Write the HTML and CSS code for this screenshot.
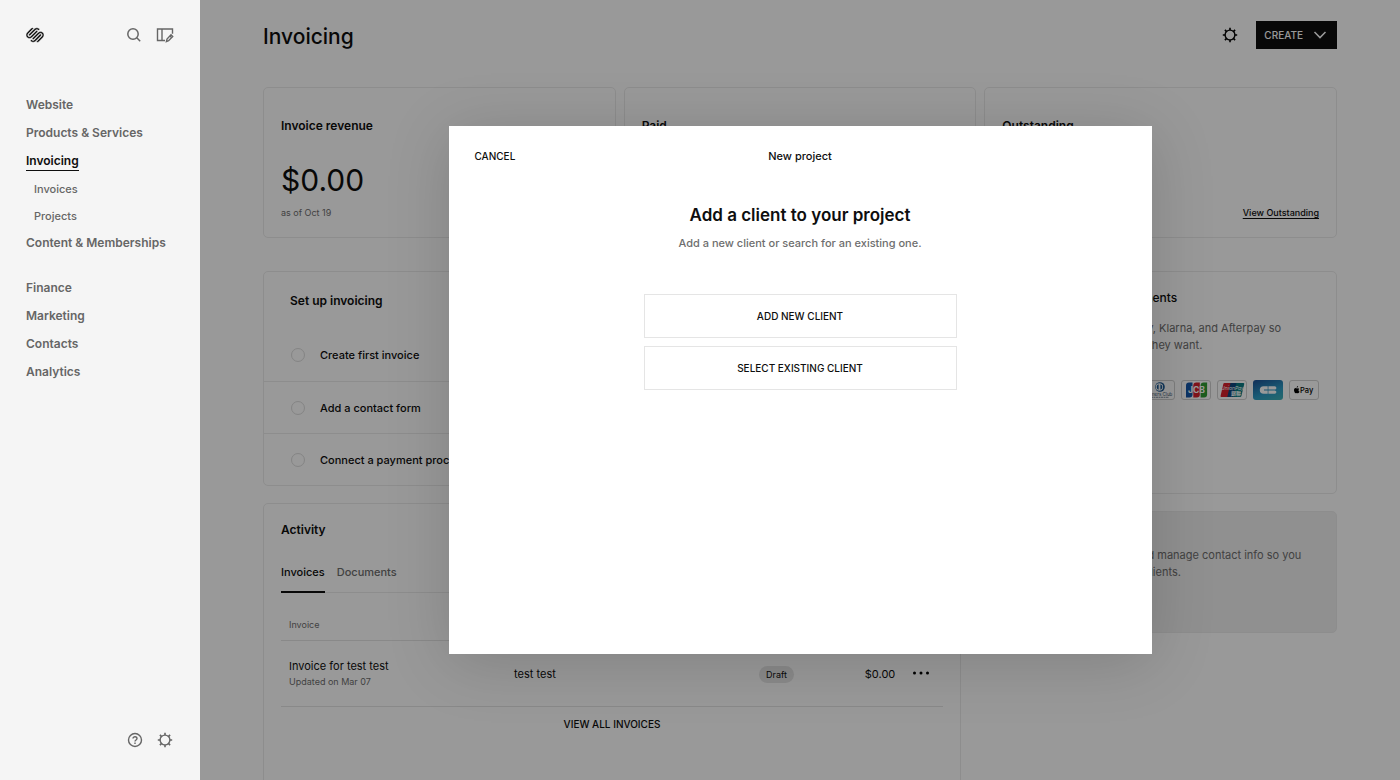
FILE: index.html
```html
<!DOCTYPE html>
<html lang="en">
<head>
    <meta charset="utf-8">
    <meta name="viewport" content="width=device-width,initial-scale=1.0">
    <title>Invoicing</title>
    <link rel="stylesheet" href="styles.css">
</head>

<body>
    <svg class="defs" width="0" height="0" aria-hidden="true">
        <symbol id="gear" viewBox="0 0 16 16">
            <circle cx="8" cy="8" r="4.9" fill="none" stroke="currentColor" stroke-width="1.4" />
            <path d="M8 .8v2.3M8 12.9v2.3M.8 8h2.3M12.9 8h2.3M2.9 2.9l1.7 1.7M11.4 11.4l1.7 1.7M2.9 13.1l1.7-1.7M11.4 4.6l1.7-1.7" fill="none" stroke="currentColor" stroke-width="1.6" />
        </symbol>
    </svg>

    <aside class="sidebar">
        <div class="sidebar-top">
            <a href="#" class="logo" aria-label="Home">
                <svg width="18" height="18" viewBox="0 0 24 24" fill="currentColor" stroke="#f5f5f5" stroke-width=".5">
                    <path d="M22.655 8.719c-1.802-1.801-4.726-1.801-6.564 0l-7.351 7.35c-.45.45-.45 1.2 0 1.65.45.449 1.2.449 1.65 0l7.351-7.351c.899-.899 2.362-.899 3.264 0 .9.9.9 2.364 0 3.264l-7.239 7.239c.9.899 2.362.899 3.263 0l5.589-5.589c1.836-1.838 1.836-4.763.037-6.563zm-2.475 2.437c-.451-.45-1.201-.45-1.65 0l-7.354 7.389c-.9.9-2.361.9-3.262 0-.45-.45-1.201-.45-1.651 0-.45.45-.45 1.2 0 1.65 1.801 1.801 4.726 1.801 6.564 0l7.351-7.351c.449-.487.449-1.238.002-1.688zm-2.439-7.35c-1.801-1.801-4.726-1.801-6.564 0l-7.351 7.351c-.45.449-.45 1.199 0 1.649s1.2.45 1.65 0l7.395-7.351c.9-.899 2.371-.899 3.27 0 .451.45 1.201.45 1.65 0 .421-.487.421-1.199-.05-1.649zm-2.475 2.475c-.45-.449-1.2-.449-1.65 0l-7.351 7.351c-.899.9-2.363.9-3.265 0-.9-.9-.9-2.364 0-3.264l7.239-7.239c-.9-.9-2.362-.9-3.263 0L1.35 8.719c-1.8 1.8-1.8 4.725 0 6.563 1.801 1.801 4.725 1.801 6.564 0l7.35-7.351c.451-.488.451-1.2.002-1.65z" />
                </svg>
            </a>
            <div class="icon-row">
                <button type="button" class="icon-button" aria-label="Search">
                    <svg width="16" height="16" viewBox="0 0 16 16" fill="none" stroke="currentColor" stroke-width="1.5">
                        <circle cx="7" cy="7" r="5.2" />
                        <path d="M10.8 10.8l3.4 3.4" />
                    </svg>
                </button>
                <button type="button" class="icon-button" aria-label="Edit site">
                    <svg width="18" height="16" viewBox="0 0 18 16" fill="none" stroke="currentColor" stroke-width="1.4">
                        <path d="M9 13.5H1.5V2h15v4.8" />
                        <path d="M6 2v11.5" />
                        <path d="M10.4 14.6l.6-2.6 4-4.2 1.7 1.7-4.1 4.2z" />
                        <path d="M14 9l1.6 1.6" />
                    </svg>
                </button>
            </div>
        </div>
        <nav class="nav">
            <ul>
                <li><a href="#">Website</a></li>
                <li><a href="#">Products &amp; Services</a></li>
                <li><a href="#" class="active">Invoicing</a></li>
                <li class="sub"><a href="#">Invoices</a></li>
                <li class="sub"><a href="#">Projects</a></li>
                <li><a href="#">Content &amp; Memberships</a></li>
            </ul>
            <ul>
                <li><a href="#">Finance</a></li>
                <li><a href="#">Marketing</a></li>
                <li><a href="#">Contacts</a></li>
                <li><a href="#">Analytics</a></li>
            </ul>
        </nav>
        <div class="sidebar-bottom">
            <button type="button" class="icon-button" aria-label="Help">
                <svg width="16" height="16" viewBox="0 0 16 16" fill="none" stroke="currentColor" stroke-width="1.4">
                    <circle cx="8" cy="8" r="6.5" />
                    <path d="M6 6.6c0-2.6 4-2.4 4-.1 0 1.5-2 1.4-2 3" />
                    <path d="M8 10.5v1.4" />
                </svg>
            </button>
            <button type="button" class="icon-button" aria-label="Settings">
                <svg width="16" height="16"><use href="#gear" /></svg>
            </button>
        </div>
    </aside>

    <div class="page">
        <main class="content">
            <header class="page-header">
                <h1>Invoicing</h1>
                <button type="button" class="icon-button dark" aria-label="Invoicing settings">
                    <svg width="16" height="16"><use href="#gear" /></svg>
                </button>
                <button type="button" class="create">
                    CREATE
                    <svg width="14" height="8" viewBox="0 0 14 8" fill="none" stroke="currentColor" stroke-width="1.5">
                        <path d="M1.5 1L7 6.6 12.5 1" />
                    </svg>
                </button>
            </header>

            <section class="stats">
                <div class="card stat">
                    <h2>Invoice revenue</h2>
                    <p class="amount">$0.00</p>
                    <p class="stat-foot">as of Oct 19</p>
                </div>
                <div class="card stat">
                    <h2>Paid</h2>
                    <p class="amount">$0.00</p>
                    <p class="stat-foot"><a href="#">View Paid</a></p>
                </div>
                <div class="card stat">
                    <h2>Outstanding</h2>
                    <p class="amount">$0.00</p>
                    <p class="stat-foot"><a href="#">View Outstanding</a></p>
                </div>
            </section>

            <div class="columns">
                <div class="column">
                    <section class="card setup">
                        <h2>Set up invoicing</h2>
                        <ul>
                            <li><span class="circle"></span>Create first invoice</li>
                            <li><span class="circle"></span>Add a contact form</li>
                            <li><span class="circle"></span>Connect a payment processor</li>
                        </ul>
                    </section>

                    <section class="card activity">
                        <h2>Activity</h2>
                        <div class="tabs">
                            <button type="button" class="tab selected">Invoices</button>
                            <button type="button" class="tab">Documents</button>
                        </div>
                        <table>
                            <thead>
                                <tr>
                                    <th class="col-invoice">Invoice</th>
                                    <th class="col-client">Client</th>
                                    <th class="col-status">Status</th>
                                    <th class="col-amount">Amount</th>
                                    <th class="col-more"></th>
                                </tr>
                            </thead>
                            <tbody>
                                <tr>
                                    <td>Invoice for test test<small>Updated on Mar 07</small></td>
                                    <td>test test</td>
                                    <td><span class="pill">Draft</span></td>
                                    <td class="col-amount">$0.00</td>
                                    <td class="col-more">
                                        <button type="button" class="icon-button dark" aria-label="More">
                                            <svg width="18" height="8" viewBox="0 0 18 8" fill="currentColor">
                                                <circle cx="3.5" cy="3" r="1.5" />
                                                <circle cx="10" cy="3" r="1.5" />
                                                <circle cx="16.5" cy="3" r="1.5" />
                                            </svg>
                                        </button>
                                    </td>
                                </tr>
                            </tbody>
                        </table>
                        <a href="#" class="view-all">VIEW ALL INVOICES</a>
                    </section>
                </div>

                <div class="column">
                    <section class="card payments">
                        <h2>Start accepting card payments</h2>
                        <p>Take payments via Apple Pay, Klarna, and Afterpay so<br>clients can pay you the way they want.</p>
                        <div class="brands">
                            <span class="brand">VISA</span>
                            <span class="brand">MC</span>
                            <span class="brand">AMEX</span>
                            <span class="brand">DISC</span>
                            <span class="brand">
                                <svg width="28" height="18" viewBox="0 0 28 18">
                                    <circle cx="14" cy="6" r="4.8" fill="#1b5a94" />
                                    <circle cx="13.4" cy="6" r="3.7" fill="#fff" />
                                    <path d="M12.6 3.2a3 3 0 0 0 0 5.6zM14.4 3.2a3 3 0 0 1 0 5.6z" fill="#1b5a94" />
                                    <text x="14" y="14.5" text-anchor="middle" font-size="4.5" fill="#34506c">Diners Club</text>
                                    <path d="M5 16.3h18" stroke="#8796a5" stroke-width="1" stroke-dasharray="2 .5" />
                                </svg>
                            </span>
                            <span class="brand">
                                <svg width="28" height="18" viewBox="0 0 28 18">
                                    <path d="M7 1.5h3.5v12a3 3 0 0 1-3 3H4v-12a3 3 0 0 1 3-3z" fill="#1557a8" />
                                    <path d="M14.3 1.5h3.5v12a3 3 0 0 1-3 3h-3.5v-12a3 3 0 0 1 3-3z" fill="#d8202c" />
                                    <path d="M21.6 1.5h3.5v12a3 3 0 0 1-3 3h-3.5v-12a3 3 0 0 1 3-3z" fill="#2f9c33" />
                                    <text x="14.4" y="12" text-anchor="middle" font-size="8.5" font-weight="700" fill="#fff">JCB</text>
                                </svg>
                            </span>
                            <span class="brand">
                                <svg width="28" height="18" viewBox="0 0 28 18">
                                    <path d="M6.5 2h7l-3.2 14H3.6a1 1 0 0 1-1-1.3l2.7-11.6A1.4 1.4 0 0 1 6.5 2z" fill="#d8202c" />
                                    <path d="M12.5 2h7l-3.2 14h-7z" fill="#12467d" />
                                    <path d="M18.5 2h6.7a1 1 0 0 1 1 1.3l-2.8 11.6a1.4 1.4 0 0 1-1.3 1.1h-7z" fill="#0b7b83" />
                                    <text x="14.5" y="8.5" text-anchor="middle" font-size="5" font-style="italic" fill="#fff">UnionPay</text>
                                    <text x="18" y="14" text-anchor="middle" font-size="5" font-weight="700" fill="#fff">銀聯</text>
                                </svg>
                            </span>
                            <span class="brand cb">
                                <svg width="28" height="18" viewBox="0 0 28 18" fill="#fff">
                                    <path d="M13.7 8.6V5.2H9.6a3.8 3.8 0 0 0 0 7.6h4.1V9.4H10v-.8z" />
                                    <path d="M14.4 5.2h6.3a1.7 1.7 0 0 1 0 3.4h-6.3zM14.4 9.4h6.3a1.7 1.7 0 0 1 0 3.4h-6.3z" />
                                </svg>
                            </span>
                            <span class="brand">
                                <svg width="28" height="18" viewBox="0 0 28 18">
                                    <path d="M7.9 7.2c.7 0 1.1.4 1.3.7-1 .6-.9 2.2.3 2.7-.3.9-.9 1.7-1.5 1.7-.5 0-.6-.3-1.1-.3s-.7.3-1.1.3c-.9 0-1.8-1.8-1.8-3.2 0-1.3.8-2 1.7-2 .6 0 .9.4 1.2.4.3 0 .6-.3 1-.3zM6.7 6.8c0-.9.6-1.6 1.4-1.7.1.9-.6 1.7-1.4 1.7z" />
                                    <text x="10" y="12" font-size="7.5" font-weight="500">Pay</text>
                                </svg>
                            </span>
                        </div>
                        <a href="#" class="card-action">Get started</a>
                    </section>

                    <section class="card contacts">
                        <h2>Contacts</h2>
                        <p>Arrange all your contacts and manage contact info so you<br>can easily send invoices to clients.</p>
                        <a href="#" class="card-action">View contacts</a>
                    </section>
                </div>
            </div>
        </main>

        <div class="overlay">
            <div class="modal" role="dialog" aria-modal="true" aria-labelledby="modal-title">
                <header class="modal-header">
                    <button type="button" class="cancel">CANCEL</button>
                    <h2 id="modal-title">New project</h2>
                </header>
                <div class="modal-body">
                    <h3>Add a client to your project</h3>
                    <p>Add a new client or search for an existing one.</p>
                    <div class="choices">
                        <button type="button">ADD NEW CLIENT</button>
                        <button type="button">SELECT EXISTING CLIENT</button>
                    </div>
                </div>
            </div>
        </div>
    </div>
</body>

</html>
```
FILE: styles.css
```css
:root {
    --ink: #0e0e0e;
    --muted: #6e6e6e;
    --line: #ececec;
}

*,
*:before,
*:after {
    box-sizing: border-box;
}

body {
    margin: 0;
    height: 100vh;
    display: flex;
    overflow: hidden;
    font-family: Inter, "Noto Sans CJK SC", sans-serif;
    font-size: 11px;
    color: var(--ink);
}

h1, h2, h3, p, ul {
    margin: 0;
    padding: 0;
    font-weight: 500;
}

ul {
    list-style: none;
}

a {
    color: inherit;
    text-decoration: none;
}

button {
    margin: 0;
    padding: 0;
    border: 0;
    background: none;
    font: inherit;
    font-weight: 500;
    color: inherit;
    cursor: pointer;
}

svg {
    display: block;
}

.defs {
    position: absolute;
}

/* Sidebar */

.sidebar {
    flex: 0 0 200px;
    display: flex;
    flex-direction: column;
    padding: 26px 26px 32px;
    background: #f5f5f5;
    color: #666;
}

.sidebar-top {
    display: flex;
    justify-content: space-between;
    align-items: center;
    margin-bottom: 47px;
}

.logo {
    color: var(--ink);
}

.icon-row {
    display: flex;
    gap: 14px;
}

.nav {
    flex: 1;
    display: flex;
    flex-direction: column;
    gap: 17px;
    font-size: 12px;
    white-space: nowrap;
}

.nav li {
    height: 28px;
    display: flex;
    align-items: center;
    font-weight: 600;
    line-height: 18px;
}

.nav .sub {
    height: 27px;
    padding-left: 8px;
    font-size: 11px;
    font-weight: 500;
}

.nav .active {
    color: var(--ink);
    box-shadow: 0 1px var(--ink);
}

.sidebar-bottom {
    display: flex;
    justify-content: flex-end;
    gap: 14px;
    padding-right: 1px;
}

/* Page */

.page {
    position: relative;
    flex: 1;
    overflow: hidden;
    background: #fff;
}

.content {
    padding: 21px 63px 0;
}

.page-header {
    display: flex;
    align-items: center;
    gap: 18px;
    margin-bottom: 38px;
}

.page-header h1 {
    flex: 1;
    padding-top: 4px;
    font-size: 21px;
    line-height: 24px;
}

.dark {
    color: #000;
}

.create {
    height: 28px;
    padding: 0 10px 0 8px;
    display: flex;
    align-items: center;
    gap: 10px;
    background: var(--ink);
    color: #fff;
    font-size: 10px;
}

.card {
    border: 1px solid var(--line);
    border-radius: 5px;
}

.card h2 {
    font-size: 12px;
    font-weight: 600;
    line-height: 18px;
}

.stats {
    display: grid;
    grid-template-columns: repeat(3, 1fr);
    gap: 8px;
    margin-bottom: 33px;
}

.stat {
    padding: 29px 17px 17px;
}

.amount {
    margin: 25px 0 6px;
    font-size: 30px;
    font-weight: 400;
    line-height: 40px;
}

.stat-foot {
    font-size: 9px;
    font-weight: 400;
    line-height: 14px;
    color: var(--muted);
}

.stat-foot a {
    display: block;
    font-weight: 500;
    text-align: right;
    text-decoration: underline;
    text-underline-offset: 2px;
    color: var(--ink);
}

.columns {
    display: grid;
    grid-template-columns: 698fr 354fr;
    gap: 22px;
}

.column {
    display: flex;
    flex-direction: column;
    gap: 17px;
}

.setup h2 {
    padding: 20px 26px 19px;
}

.setup li {
    height: 52px;
    padding: 0 27px;
    display: flex;
    align-items: center;
    gap: 15px;
}

.setup li + li {
    border-top: 1px solid var(--line);
}

.circle {
    width: 14px;
    height: 14px;
    border: 1px solid #dcdcdc;
    border-radius: 50%;
}

.activity {
    height: 340px;
    padding: 17px 17px 0;
}

.tabs {
    display: flex;
    gap: 12px;
    margin-top: 24px;
    border-bottom: 1px solid var(--line);
}

.tab {
    height: 30px;
    margin-bottom: -1px;
    padding-bottom: 10px;
    border-bottom: 2px solid transparent;
    color: var(--muted);
}

.tab.selected {
    border-color: var(--ink);
    color: var(--ink);
}

table {
    width: 100%;
    table-layout: fixed;
    border-collapse: collapse;
}

th,
td {
    padding: 0 8px;
    border-bottom: 1px solid #e4e4e4;
    font-weight: 400;
    text-align: left;
}

th {
    height: 47px;
    padding-top: 17px;
    font-size: 9px;
    color: var(--muted);
}

td {
    height: 66px;
    padding-top: 2px;
    line-height: 15px;
}

td small {
    display: block;
    font-size: 9px;
    color: var(--muted);
}

.col-invoice {
    width: 34%;
}

.col-client {
    width: 37%;
}

.col-status {
    width: 12%;
}

.col-amount {
    text-align: right;
}

.col-more {
    width: 6%;
}

.pill {
    display: inline-block;
    padding: 1px 7px;
    border-radius: 9px;
    background: #e6e6e6;
    font-size: 9px;
}

.view-all {
    display: block;
    margin-top: 9px;
    font-size: 10px;
    font-weight: 500;
    line-height: 16px;
    text-align: center;
}

.payments,
.contacts {
    padding: 17px;
    display: flex;
    flex-direction: column;
}

.payments {
    height: 223px;
}

.payments h2 {
    font-weight: 500;
}

.payments p,
.contacts p {
    font-weight: 400;
    line-height: 17px;
    white-space: nowrap;
    color: var(--muted);
}

.payments p {
    margin: 13px 0 26px;
}

.brands {
    display: flex;
    gap: 6px;
}

.brand {
    width: 30px;
    height: 20px;
    border: 1px solid #d0d0d0;
    border-radius: 3px;
    font-size: 9px;
}

.brand.cb {
    border-color: transparent;
    background: linear-gradient(160deg, #1c4f94, #2c9bc4 60%, #3fb0b4) border-box;
}

.card-action {
    margin-top: auto;
    text-decoration: underline;
}

.contacts {
    height: 122px;
    padding-top: 10px;
    background: #f0f0f0;
}

.contacts p {
    margin-top: 7px;
}

/* Modal */

.overlay {
    position: absolute;
    inset: 0;
    display: flex;
    align-items: center;
    justify-content: center;
    background: rgba(0, 0, 0, 0.4);
}

.modal {
    width: 703px;
    max-width: 90%;
    min-height: 528px;
    padding: 20px 26px;
    background: #fff;
    box-shadow: 0 8px 60px rgba(0, 0, 0, 0.16);
}

.modal-header {
    display: grid;
    grid-template-columns: 1fr auto 1fr;
    align-items: center;
    line-height: 20px;
}

.modal-header h2 {
    font-size: 11px;
}

.cancel {
    justify-self: start;
    font-size: 10px;
}

.modal-body {
    margin-top: 37px;
    text-align: center;
}

.modal-body h3 {
    font-size: 17px;
    font-weight: 600;
    line-height: 24px;
}

.modal-body p {
    margin: 8px 0 43px;
    line-height: 16px;
    color: var(--muted);
}

.choices {
    width: 313px;
    max-width: 100%;
    margin: 0 auto;
    display: flex;
    flex-direction: column;
    gap: 8px;
}

.choices button {
    height: 44px;
    border: 1px solid #e5e5e5;
    font-size: 10px;
}
```
